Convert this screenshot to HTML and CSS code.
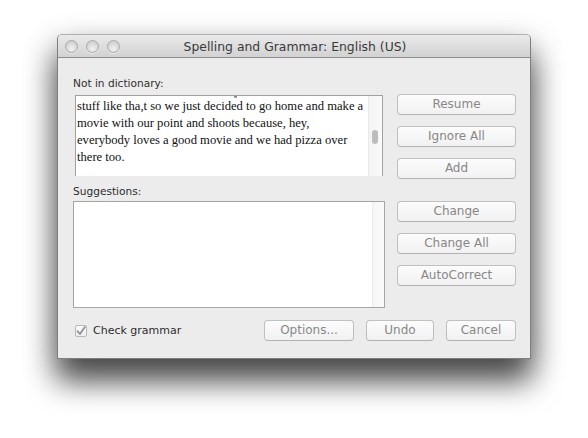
FILE: index.html
```
<!DOCTYPE html>
<html>
<head>
<meta charset="utf-8">
<link rel="stylesheet" href="styles.css">
</head>
<body>
<div class="window">
  <div class="titlebar">
    <div class="lights">
      <span class="light"></span><span class="light"></span><span class="light"></span>
    </div>
    <div class="title">Spelling and Grammar: English (US)</div>
  </div>
  <div class="content">
    <div class="main">
      <div class="left">
        <div class="label first">Not in dictionary:</div>
        <div class="textbox">
          <div class="text">
            <span class="desc"></span>
            <p>stuff like tha,t so we just decided to go home and make a movie with our point and shoots because, hey, everybody loves a good movie and we had pizza over there too.</p>
          </div>
          <div class="vscroll"><span class="thumb"></span></div>
        </div>
        <div class="label second">Suggestions:</div>
        <div class="listbox">
          <div class="listarea"></div>
          <div class="listscroll"></div>
        </div>
      </div>
      <div class="right">
        <div class="group">
          <button class="btn">Resume</button>
          <button class="btn">Ignore All</button>
          <button class="btn">Add</button>
        </div>
        <div class="group">
          <button class="btn">Change</button>
          <button class="btn">Change All</button>
          <button class="btn">AutoCorrect</button>
        </div>
      </div>
    </div>
    <div class="bottom">
      <label class="check">
        <span class="box">
          <svg width="10" height="10" viewBox="0 0 10 10"><path d="M1.5 5.2 L4 8 L8.8 1" fill="none" stroke="#8a8a8a" stroke-width="1.6" stroke-linecap="round" stroke-linejoin="round"/></svg>
        </span>
        <span class="checklabel">Check grammar</span>
      </label>
      <div class="bbtns">
        <button class="btn options">Options...</button>
        <button class="btn undo">Undo</button>
        <button class="btn cancel">Cancel</button>
      </div>
    </div>
  </div>
</div>
</body>
</html>
```
FILE: styles.css
```
html, body {
  margin: 0;
  padding: 0;
  background: #ffffff;
}
body {
  width: 588px;
  height: 438px;
  padding: 34px 0 0 57px;
  box-sizing: border-box;
  font-family: "DejaVu Sans", "Liberation Sans", sans-serif;
}
.window {
  width: 474px;
  height: 325px;
  box-sizing: border-box;
  border: 1px solid #7e7e7e;
  border-top-color: #b0b0b0;
  border-radius: 5px 5px 0 0;
  background: #ececec;
  box-shadow: 0 22px 30px rgba(0, 0, 0, 0.62), 0 12px 34px rgba(0,0,0,0.3);
  display: flex;
  flex-direction: column;
}
.titlebar {
  height: 22px;
  flex: none;
  border-bottom: 1px solid #8f8f8f;
  border-radius: 4px 4px 0 0;
  background: linear-gradient(#eaeaea, #d2d2d2);
  display: flex;
  align-items: center;
}
.lights {
  display: flex;
  gap: 8px;
  padding-left: 7px;
}
.light {
  width: 11px;
  height: 11px;
  border-radius: 50%;
  border: 1px solid #a9a9a9;
  background: radial-gradient(circle at 50% 70%, #f2f2f2 0%, #d6d6d6 60%, #c8c8c8 100%);
  box-shadow: 0 1px 0 rgba(255,255,255,0.6);
}
.title {
  flex: 1;
  text-align: center;
  font-size: 12.4px;
  color: #3a3a3a;
  margin-right: 60px;
  padding-top: 1px;
}
.content {
  flex: 1;
  display: flex;
  flex-direction: column;
  padding: 0 14px 0 15px;
}
.main {
  display: flex;
  gap: 12px;
}
.left {
  width: 312px;
  display: flex;
  flex-direction: column;
}
.label {
  font-size: 10.6px;
  color: #2e2e2e;
  line-height: 12px;
}
.label.first {
  margin-top: 19px;
}
.label.second {
  margin-top: 9px;
}
.textbox {
  margin: 6px 2px 0 2px;
  height: 81px;
  box-sizing: border-box;
  border: 1px solid #a0a0a0;
  border-bottom: none;
  background: #fff;
  display: flex;
  overflow: hidden;
}
.text {
  flex: 1;
  padding: 2px 4px 0 1px;
  font-family: "Liberation Serif", "DejaVu Serif", serif;
  font-size: 12.6px;
  line-height: 17px;
  color: #111;
  overflow: hidden;
  position: relative;
}
.desc {
  position: absolute;
  left: 158px;
  top: 0;
  width: 3px;
  height: 2px;
  border-radius: 0 0 2px 2px;
  background: #888;
}
.text p {
  margin: 0;
}
.vscroll {
  width: 13px;
  flex: none;
  background: linear-gradient(90deg, #f4f4f4, #fafafa);
  border-left: 1px solid #e8e8e8;
  position: relative;
}
.thumb {
  position: absolute;
  left: 3px;
  top: 34px;
  width: 6px;
  height: 14px;
  border-radius: 3px;
  background: #bdbdbd;
}
.listbox {
  margin-top: 4px;
  height: 107px;
  box-sizing: border-box;
  border: 1px solid #a5a5a5;
  background: #fff;
  display: flex;
}
.listarea {
  flex: 1;
}
.listscroll {
  width: 11px;
  background: linear-gradient(90deg, #f6f6f6, #fbfbfb);
  border-left: 1px solid #ededed;
}
.right {
  width: 119px;
  display: flex;
  flex-direction: column;
  gap: 22px;
  padding-top: 36px;
}
.group {
  display: flex;
  flex-direction: column;
  gap: 11px;
}
.btn {
  height: 21px;
  box-sizing: border-box;
  border: 1px solid #c0c0c0;
  border-bottom-color: #b2b2b2;
  border-radius: 4px;
  background: linear-gradient(#fcfcfc, #f1f1f1);
  color: #878787;
  font-family: "DejaVu Sans", "Liberation Sans", sans-serif;
  font-size: 12px;
  padding: 0;
  line-height: 19px;
  text-align: center;
}
.bottom {
  display: flex;
  align-items: center;
  margin-top: 12px;
}
.check {
  display: flex;
  align-items: center;
  gap: 6px;
  margin-left: 2px;
}
.box {
  width: 12px;
  height: 12px;
  box-sizing: border-box;
  border: 1px solid #b8b8b8;
  border-radius: 2px;
  background: linear-gradient(#fbfbfb, #eeeeee);
  display: flex;
  align-items: center;
  justify-content: center;
}
.checklabel {
  font-size: 11px;
  color: #2e2e2e;
}
.bbtns {
  margin-left: auto;
  display: flex;
  gap: 12px;
}
.options { width: 90px; }
.undo { width: 68px; }
.cancel { width: 70px; }
```
